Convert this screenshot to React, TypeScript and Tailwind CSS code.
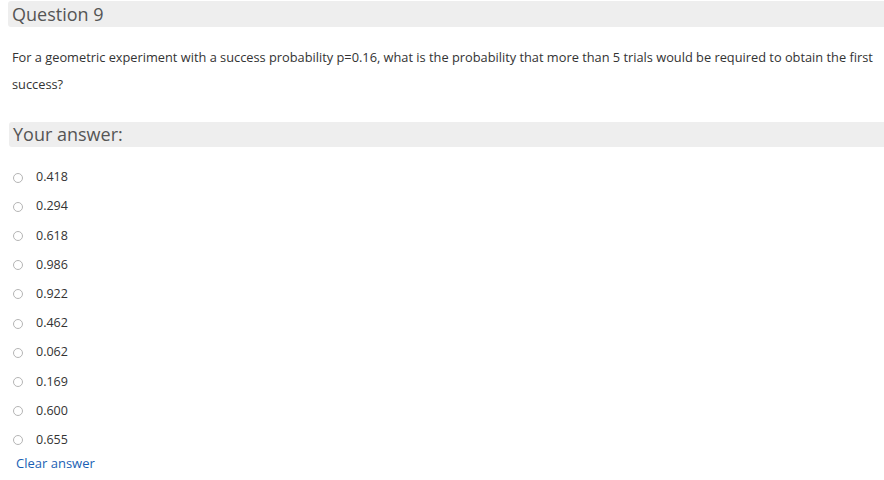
import React from "react";

const options = ["0.418", "0.294", "0.618", "0.986", "0.922", "0.462", "0.062", "0.169", "0.600", "0.655"];

export default function App() {
  return (
    <div className="w-[884px] h-[480px] bg-white overflow-hidden font-['Open_Sans',sans-serif] text-[#333]">
      {/* Question header */}
      <div className="ml-[8px] mt-[1px] h-[26px] bg-[#eeeeee] rounded-l-[3px] pl-[4px] text-[18px] leading-[26px] text-[#555]">
        Question 9
      </div>

      <p className="mt-[17px] pl-[12px] pr-0 text-[12.8px] leading-[27px] text-[#333]">
        For a geometric experiment with a success probability p=0.16, what is the probability that more than 5 trials would be
        required to obtain the first success?
      </p>

      {/* Answer header */}
      <div className="ml-[9px] mt-[24px] h-[25px] bg-[#eeeeee] rounded-l-[3px] pl-[4px] text-[18px] leading-[25px] text-[#555]">
        Your answer:
      </div>

      <div className="mt-[16px] flex flex-col">
        {options.map((o) => (
          <label key={o} className="h-[29.2px] flex items-center pl-[13px]">
            <span className="w-[10px] h-[10px] rounded-full border border-[#b5b5b5] bg-white shrink-0" />
            <span className="ml-[13px] text-[12.5px] text-[#333]">{o}</span>
          </label>
        ))}
      </div>

      <div className="pl-[16px] -mt-[1px] text-[13px] leading-[18px] text-[#1a5fb4]">Clear answer</div>
    </div>
  );
}
